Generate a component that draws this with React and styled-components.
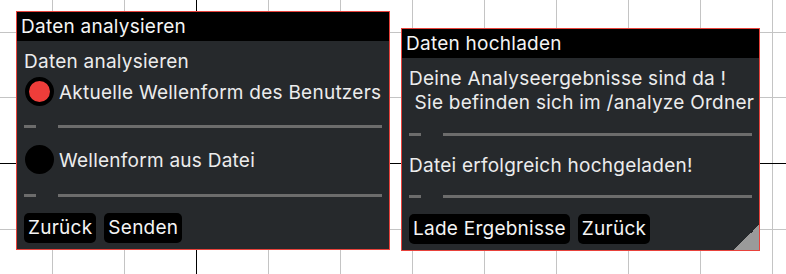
import React from "react";
import styled, { createGlobalStyle } from "styled-components";

const vLines = [52, 124, 268, 340, 412, 484, 556, 628, 700, 772];
const hLines = [32, 97, 229];
const line = (dir, pos, color) =>
  `linear-gradient(${dir}, transparent ${pos}px, ${color} ${pos}px, ${color} ${pos + 1}px, transparent ${pos + 1}px)`;

const gridBg = [
  line("to right", 196, "#000"),
  line("to bottom", 163, "#000"),
  ...vLines.map((x) => line("to right", x, "#c4c4c4")),
  ...hLines.map((y) => line("to bottom", y, "#c4c4c4")),
].join(",");

const Global = createGlobalStyle`
  html, body { margin: 0; padding: 0; height: 100%; }
  body {
    background-color: #fff;
    background-image: ${gridBg};
    font-family: Inter, "Noto Sans", sans-serif;
  }
  #root { height: 100%; }
`;

const Canvas = styled.div`
  display: flex;
  align-items: flex-start;
  gap: 11px;
  padding: 11px 0 0 16px;
`;

const Panel = styled.section`
  position: relative;
  box-sizing: border-box;
  width: ${(p) => p.$w}px;
  height: ${(p) => p.$h}px;
  margin-top: ${(p) => p.$top || 0}px;
  background: #26292c;
  border: 1px solid #e8423b;
  display: flex;
  flex-direction: column;
  overflow: hidden;
  font-size: 19px;
  letter-spacing: 0.25px;
`;

const TitleBar = styled.div`
  height: 29px;
  flex: none;
  background: #000;
  color: #f4f4f4;
  line-height: 29px;
  padding-left: 4px;
  white-space: nowrap;
`;

const Body = styled.div`
  display: flex;
  flex-direction: column;
  padding: 0 7px;
  flex: 1;
`;

const Text = styled.div`
  color: #ececec;
  line-height: 24px;
  white-space: pre;
  margin-top: ${(p) => p.$mt || 0}px;
`;

const RadioRow = styled.div`
  display: flex;
  align-items: center;
  gap: 5px;
  height: 30px;
  margin-top: ${(p) => p.$mt || 0}px;
  color: #ececec;
  line-height: 24px;
  white-space: nowrap;
`;

const RadioLabel = styled.span`
  padding-top: 3px;
`;

const RadioDot = styled.span`
  box-sizing: border-box;
  width: 29px;
  height: 29px;
  flex: none;
  border-radius: 50%;
  background: ${(p) => (p.$checked ? "#ee3d3a" : "#000")};
  border: 4px solid #000;
  margin-left: 1px;
`;

const Divider = styled.div`
  display: flex;
  gap: 22px;
  height: 3px;
  margin-top: ${(p) => p.$mt || 0}px;
`;

const Dash = styled.span`
  width: 12px;
  background: #6c6c6c;
`;

const Track = styled.span`
  flex: 1;
  background: #6c6c6c;
`;

const ButtonRow = styled.div`
  display: flex;
  gap: 8px;
  margin-top: ${(p) => p.$mt || 0}px;
`;

const Button = styled.button`
  height: 30px;
  padding: 0 4px;
  border: none;
  border-radius: 5px;
  background: #000;
  color: #f4f4f4;
  font-family: inherit;
  font-size: 19px;
  letter-spacing: 0.25px;
  line-height: 30px;
  cursor: pointer;
`;

const Corner = styled.span`
  position: absolute;
  right: 0;
  bottom: 0;
  width: 25px;
  height: 25px;
  background: linear-gradient(to top left, #9a9a9a 50%, transparent 50%);
`;

export default function App() {
  return (
    <>
      <Global />
      <Canvas>
        <Panel $w={374} $h={239}>
          <TitleBar>Daten analysieren</TitleBar>
          <Body>
            <Text $mt={9}>Daten analysieren</Text>
            <RadioRow $mt={2}>
              <RadioDot $checked />
              <RadioLabel>Aktuelle Wellenform des Benutzers</RadioLabel>
            </RadioRow>
            <Divider $mt={19}>
              <Dash />
              <Track />
            </Divider>
            <RadioRow $mt={16}>
              <RadioDot />
              <RadioLabel>Wellenform aus Datei</RadioLabel>
            </RadioRow>
            <Divider $mt={20}>
              <Dash />
              <Track />
            </Divider>
            <ButtonRow $mt={16}>
              <Button>Zurück</Button>
              <Button>Senden</Button>
            </ButtonRow>
          </Body>
        </Panel>
        <Panel $w={359} $h={223} $top={17}>
          <TitleBar>Daten hochladen</TitleBar>
          <Body>
            <Text $mt={9}>
              {"Deine Analyseergebnisse sind da !\n Sie befinden sich im /analyze Ordner"}
            </Text>
            <Divider $mt={18}>
              <Dash />
              <Track />
            </Divider>
            <Text $mt={18}>Datei erfolgreich hochgeladen!</Text>
            <Divider $mt={17}>
              <Dash />
              <Track />
            </Divider>
            <ButtonRow $mt={16}>
              <Button>Lade Ergebnisse</Button>
              <Button>Zurück</Button>
            </ButtonRow>
          </Body>
          <Corner />
        </Panel>
      </Canvas>
    </>
  );
}
